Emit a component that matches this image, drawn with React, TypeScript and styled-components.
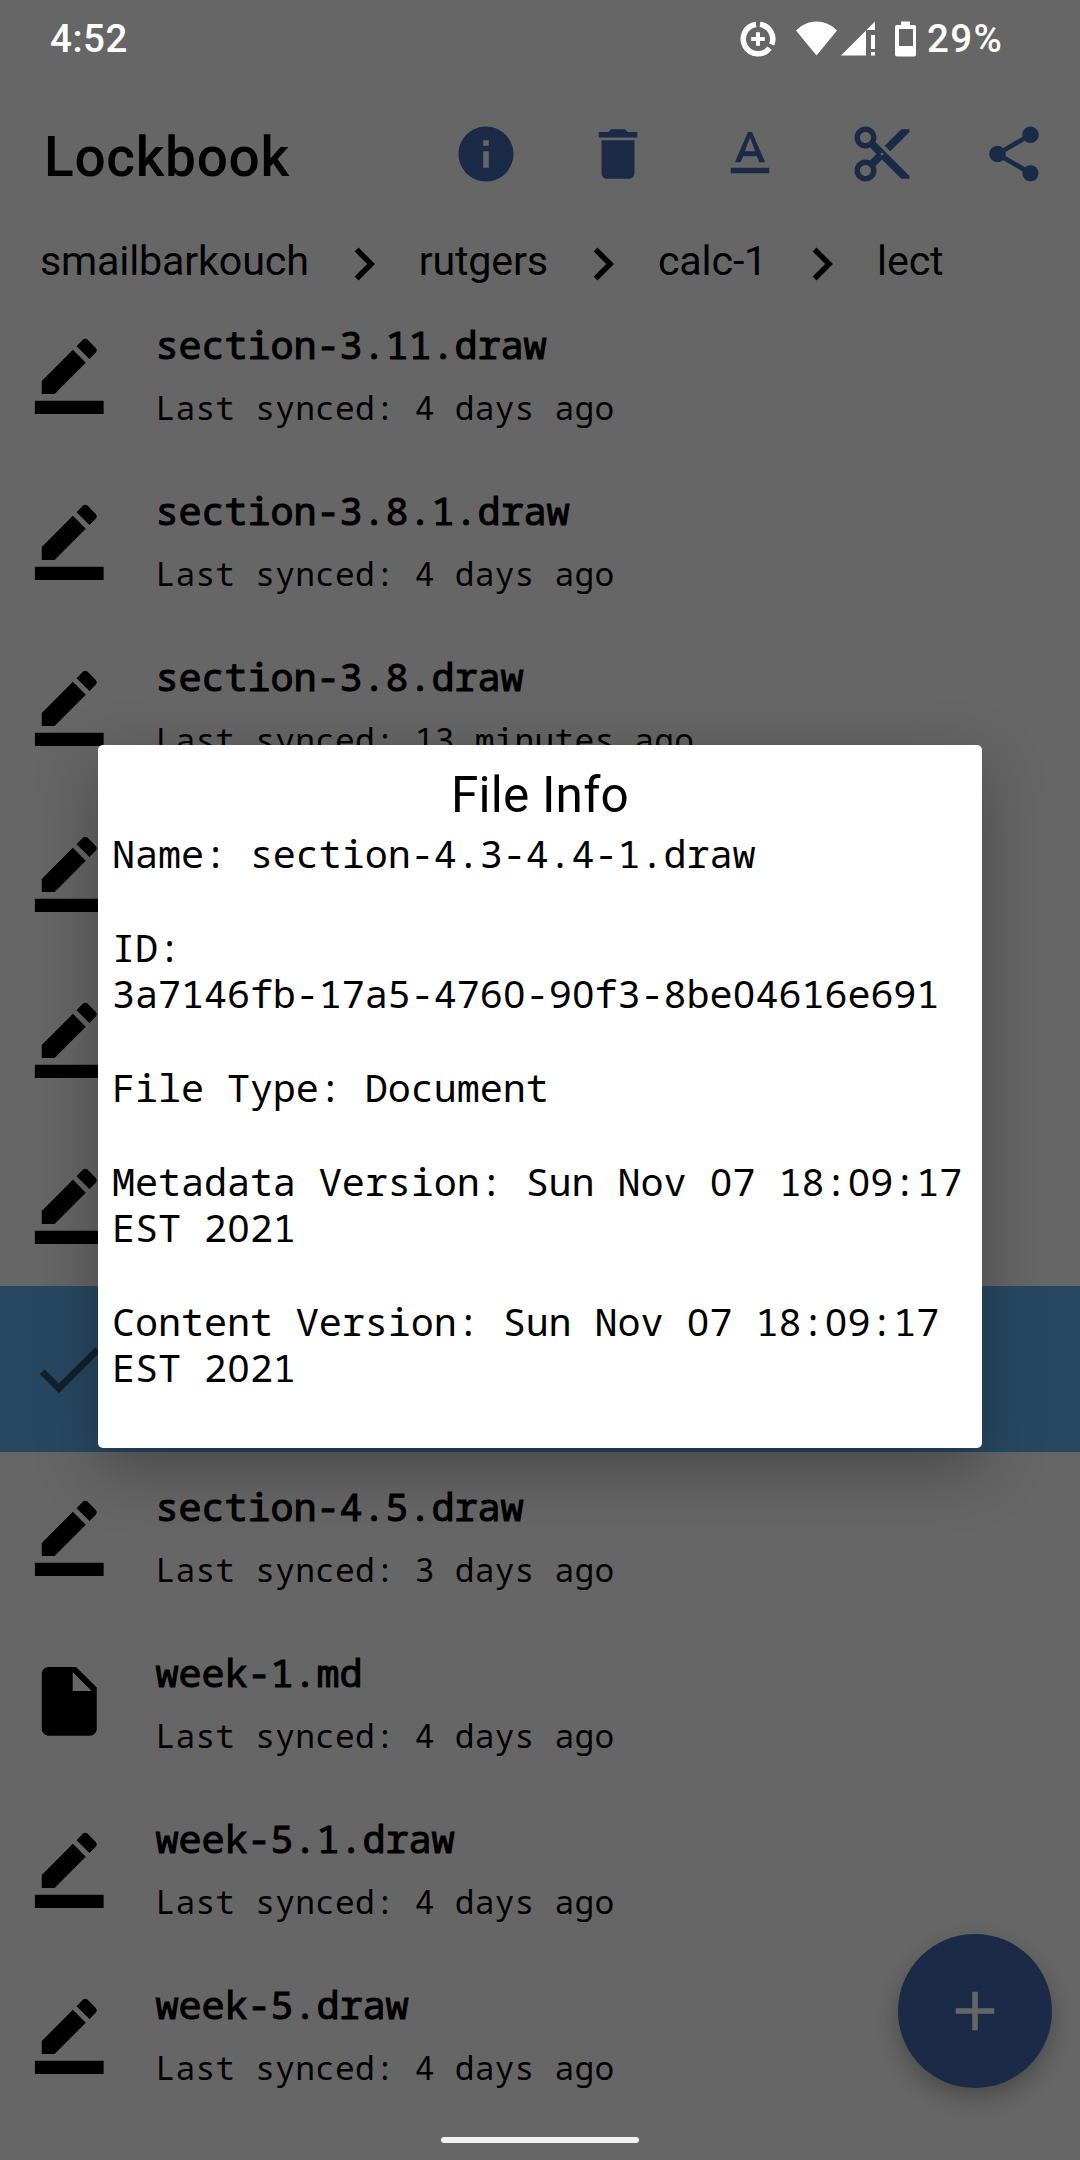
import React from "react";
import styled, { createGlobalStyle } from "styled-components";

const mono = `"Noto Sans Mono", "Droid Sans Mono", "DejaVu Sans Mono", monospace`;
const roboto = `Roboto, "Noto Sans", sans-serif`;

const GlobalStyle = createGlobalStyle`
  * { box-sizing: border-box; }
  html, body { margin: 0; padding: 0; background: #666; }
`;

const Screen = styled.div`
  position: relative;
  width: 1080px;
  height: 2160px;
  overflow: hidden;
  background: #fff;
  color: #000;
  font-family: ${roboto};
`;

const Page = styled.div`
  display: flex;
  flex-direction: column;
  height: 100%;
  padding-top: 77px;
`;

const Toolbar = styled.header`
  display: flex;
  align-items: center;
  height: 154px;
  padding-left: 44px;
`;

const AppTitle = styled.h1`
  flex: 1;
  margin: 6px 0 0;
  font-size: 55px;
  line-height: 64px;
  font-weight: 500;
  letter-spacing: 0.7px;
`;

const ToolButton = styled.button`
  display: flex;
  align-items: center;
  justify-content: center;
  width: 132px;
  height: 132px;
  padding: 0;
  border: 0;
  background: none;
  color: #4369b2;
`;

const Crumbs = styled.nav`
  display: flex;
  align-items: center;
  gap: 22px;
  height: 59px;
  padding: 6px 0 0 40px;
  white-space: nowrap;
`;

const Crumb = styled.span`
  font-size: 41.25px;
  line-height: 48px;
  margin-top: -5px;
  letter-spacing: -0.18px;
`;

const Icon = styled.svg<{ $size: number }>`
  display: block;
  flex: none;
  width: ${(p) => p.$size}px;
  height: ${(p) => p.$size}px;
  fill: currentColor;
`;

const FileList = styled.ul`
  flex: 1;
  margin: 0;
  padding: 0;
  list-style: none;
`;

const FileRow = styled.li<{ $selected?: boolean }>`
  display: flex;
  align-items: center;
  gap: 44px;
  height: 166px;
  padding-left: 28px;
  background: ${(p) => (p.$selected ? "#64b5f6" : "transparent")};
`;

const RowIcon = styled.span<{ $muted?: boolean }>`
  color: ${(p) => (p.$muted ? "rgba(0, 0, 0, 0.54)" : "#000")};
`;

const FileText = styled.div`
  display: flex;
  flex-direction: column;
  gap: 17px;
  padding: 3px 0 0 1px;
  font-family: ${mono};
  white-space: pre;
`;

const FileName = styled.span`
  font-size: 38.5px;
  line-height: 50px;
  letter-spacing: -0.1px;
  -webkit-text-stroke: 1.1px currentColor;
`;

const FileMeta = styled.span`
  font-size: 33px;
  line-height: 44px;
  letter-spacing: 0.15px;
`;

const Fab = styled.button`
  position: absolute;
  right: 28px;
  bottom: 72px;
  display: flex;
  align-items: center;
  justify-content: center;
  width: 154px;
  height: 154px;
  padding: 0;
  border: 0;
  border-radius: 50%;
  background: #4369b2;
  color: #fff;
  box-shadow: 0 10px 24px rgba(0, 0, 0, 0.28);
`;

const Scrim = styled.div`
  position: absolute;
  inset: 0;
  display: flex;
  align-items: flex-start;
  justify-content: center;
  padding-top: 745px;
  background: rgba(0, 0, 0, 0.6);
`;

const Dialog = styled.section`
  width: 884px;
  height: 703px;
  padding: 21px 14px 0;
  border-radius: 5px;
  background: #fff;
  box-shadow: 0 20px 64px rgba(0, 0, 0, 0.3);
`;

const DialogTitle = styled.h2`
  margin: 0 0 6px;
  font-size: 49.5px;
  line-height: 58px;
  font-weight: 400;
  letter-spacing: 0.2px;
  text-align: center;
`;

const Detail = styled.div`
  margin-bottom: 48px;
  font-family: ${mono};
  font-size: 38.5px;
  letter-spacing: -0.12px;
`;

const DetailLine = styled.div`
  height: 46px;
  line-height: 46px;
  white-space: pre;
`;

/* Unslashed zero, spaced out to the monospaced advance. */
const PlainZero = styled.span`
  padding-left: 0.5px;
  font-family: "Noto Sans", sans-serif;
  line-height: 1;
  letter-spacing: 0.46px;
`;

const StatusBar = styled.div`
  position: absolute;
  top: 0;
  left: 0;
  right: 0;
  display: flex;
  align-items: center;
  justify-content: space-between;
  height: 77px;
  padding: 0 78px 0 50px;
  color: #fff;
  font-family: Roboto, sans-serif;
  font-size: 38.5px;
  font-weight: 500;
  letter-spacing: 0.5px;
`;

const StatusIcons = styled.div`
  display: flex;
  align-items: center;
`;

const StatusDrawing = styled.svg`
  display: block;
  fill: currentColor;
`;

const Battery = styled.span`
  width: 76px;
  padding-left: 1px;
  letter-spacing: 1.4px;
  white-space: nowrap;
`;

const HomePill = styled.div`
  position: absolute;
  left: 441px;
  bottom: 17px;
  width: 198px;
  height: 6px;
  border-radius: 3px;
  background: #f2f2f2;
`;

const paths = {
  info: "M12 2C6.48 2 2 6.48 2 12s4.48 10 10 10 10-4.48 10-10S17.52 2 12 2zm1 15h-2v-6h2v6zm0-8h-2V7h2v2z",
  remove: "M6 19c0 1.1.9 2 2 2h8c1.1 0 2-.9 2-2V7H6v12zM19 4h-3.5l-1-1h-5l-1 1H5v2h14V4z",
  rename: "M5 17v2h14v-2H5zm4.5-4.200h5l.9 2.200h2.100L12.750 4h-1.500L6.500 15h2.100l.9-2.200zM12 5.980L13.870 11h-3.740L12 5.980z",
  cut: "M9.640 7.640c.23-.5.36-1.050.36-1.640 0-2.210-1.790-4-4-4S2 3.790 2 6s1.790 4 4 4c.59 0 1.140-.13 1.640-.36L10 12l-2.360 2.360C7.140 14.130 6.590 14 6 14c-2.210 0-4 1.790-4 4s1.790 4 4 4 4-1.790 4-4c0-.59-.13-1.140-.36-1.640L12 14l7 7h3v-1L9.640 7.640zM6 8c-1.100 0-2-.89-2-2s.9-2 2-2 2 .89 2 2-.9 2-2 2zm0 12c-1.100 0-2-.89-2-2s.9-2 2-2 2 .89 2 2-.9 2-2 2zm6-7.500c-.28 0-.5-.22-.5-.5s.22-.5.5-.5.5.22.5.5-.22.5-.5.5zM19 3l-6 6 2 2 7-7V3z",
  share: "M18 16.080c-.76 0-1.440.3-1.960.77L8.910 12.700c.05-.23.09-.46.09-.7s-.04-.47-.09-.7l7.050-4.110c.54.5 1.250.81 2.040.81 1.660 0 3-1.340 3-3s-1.340-3-3-3-3 1.340-3 3c0 .24.04.47.09.7L8.040 9.810C7.500 9.310 6.790 9 6 9c-1.660 0-3 1.340-3 3s1.340 3 3 3c.79 0 1.500-.31 2.040-.81l7.120 4.160c-.05.21-.08.43-.08.65 0 1.610 1.310 2.920 2.920 2.920s2.920-1.310 2.920-2.920-1.310-2.920-2.920-2.920z",
  chevron: "M8.590 16.590 13.170 12 8.590 7.410 10 6l6 6-6 6z",
  draw: "M22 24H2v-4h20v4zM13.060 5.190l3.750 3.750L7.750 18H4v-3.750l9.060-9.060zm4.820 2.680-3.750-3.750 1.830-1.830c.39-.39 1.020-.39 1.410 0l2.340 2.340c.39.39.39 1.020 0 1.410l-1.830 1.830z",
  doc: "M6 2c-1.100 0-1.990.9-1.990 2L4 20c0 1.100.89 2 1.990 2H18c1.100 0 2-.9 2-2V8l-6-6H6zm7 7V3.500L18.500 9H13z",
  check: "M9 16.170 4.830 12l-1.420 1.410L9 19 21 7l-1.410-1.410z",
  add: "M19 13h-6v6h-2v-6H5v-2h6V5h2v6h6v2z",
};

type IconName = keyof typeof paths;

function Glyph({ name, size = 66 }: { name: IconName; size?: number }) {
  return (
    <Icon $size={size} viewBox="0 0 24 24" aria-hidden="true">
      <path d={paths[name]} />
    </Icon>
  );
}

function MonoText({ text }: { text: string }) {
  return (
    <>
      {text.split(/(0)/).map((part, i) =>
        part === "0" ? <PlainZero key={i}>0</PlainZero> : part
      )}
    </>
  );
}

const tools: IconName[] = ["info", "remove", "rename", "cut", "share"];
const crumbs = ["smailbarkouch", "rutgers", "calc-1", "lect"];

const files: { name: string; synced: string; icon: IconName; selected?: boolean }[] = [
  { name: "section-3.11.draw", synced: "4 days ago", icon: "draw" },
  { name: "section-3.8.1.draw", synced: "4 days ago", icon: "draw" },
  { name: "section-3.8.draw", synced: "13 minutes ago", icon: "draw" },
  { name: "", synced: "", icon: "draw" },
  { name: "", synced: "", icon: "draw" },
  { name: "", synced: "", icon: "draw" },
  { name: "", synced: "", icon: "check", selected: true },
  { name: "section-4.5.draw", synced: "3 days ago", icon: "draw" },
  { name: "week-1.md", synced: "4 days ago", icon: "doc" },
  { name: "week-5.1.draw", synced: "4 days ago", icon: "draw" },
  { name: "week-5.draw", synced: "4 days ago", icon: "draw" },
];

const details = [
  ["Name: section-4.3-4.4-1.draw"],
  ["ID:", "3a7146fb-17a5-4760-90f3-8be04616e691"],
  ["File Type: Document"],
  ["Metadata Version: Sun Nov 07 18:09:17", "EST 2021"],
  ["Content Version: Sun Nov 07 18:09:17", "EST 2021"],
];

export default function App() {
  return (
    <Screen>
      <GlobalStyle />
      <Page>
        <Toolbar>
          <AppTitle>Lockbook</AppTitle>
          {tools.map((tool) => (
            <ToolButton key={tool}>
              <Glyph name={tool} />
            </ToolButton>
          ))}
        </Toolbar>
        <Crumbs>
          {crumbs.map((crumb, i) => (
            <React.Fragment key={crumb}>
              {i > 0 && <Glyph name="chevron" />}
              <Crumb>{crumb}</Crumb>
            </React.Fragment>
          ))}
        </Crumbs>
        <FileList>
          {files.map((file, i) => (
            <FileRow key={i} $selected={file.selected}>
              <RowIcon $muted={file.selected}>
                <Glyph name={file.icon} size={82.5} />
              </RowIcon>
              {file.name && (
                <FileText>
                  <FileName>{file.name}</FileName>
                  <FileMeta>Last synced: {file.synced}</FileMeta>
                </FileText>
              )}
            </FileRow>
          ))}
        </FileList>
      </Page>
      <Fab>
        <Glyph name="add" />
      </Fab>
      <Scrim>
        <Dialog role="dialog">
          <DialogTitle>File Info</DialogTitle>
          {details.map((lines) => (
            <Detail key={lines[0]}>
              {lines.map((line) => (
                <DetailLine key={line}>
                  <MonoText text={line} />
                </DetailLine>
              ))}
            </Detail>
          ))}
        </Dialog>
      </Scrim>
      <StatusBar>
        <span>4:52</span>
        <StatusIcons>
          <StatusDrawing width="190" height="44" viewBox="736 17 190 44" aria-hidden="true">
            <g fill="none" stroke="#fff" strokeWidth="5.5">
              <path d="M756 24.400A14.750 14.750 0 1 0 769.600 48.100M760 24.400A14.750 14.750 0 0 1 771.700 44.500" />
            </g>
            <path d="M756 32.200h4V37h4.800v4H760v4.800h-4V41h-4.800v-4h4.800z" />
            <path d="M796 30.500C808 18.500 825 18.500 837 30.500L816.500 55.500z" />
            <path d="M841 55.500 875 21.500v8.500h-9v25.500zM871 35h4v14h-4zM871 52h4v3.500h-4z" />
            <path fillRule="evenodd" d="M901 21.500h9v3.500h4a2 2 0 0 1 2 2v27.500a2 2 0 0 1-2 2h-17a2 2 0 0 1-2-2V27a2 2 0 0 1 2-2h4zM899 29v17h14V29z" />
          </StatusDrawing>
          <Battery>29%</Battery>
        </StatusIcons>
      </StatusBar>
      <HomePill />
    </Screen>
  );
}
